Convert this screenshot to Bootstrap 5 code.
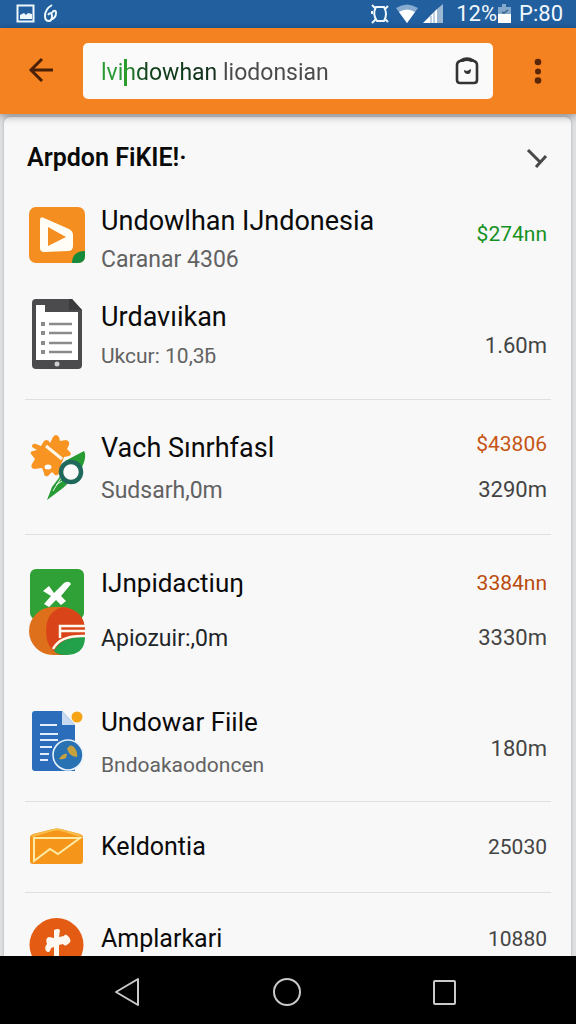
<!DOCTYPE html>
<html lang="id">
<head>
<meta charset="utf-8">
<meta name="viewport" content="width=device-width, initial-scale=1">
<title>Undowlhan</title>
<link href="https://cdn.jsdelivr.net/npm/bootstrap@5.3.0/dist/css/bootstrap.min.css" rel="stylesheet">
<style>
  body { font-family: Roboto, "Liberation Sans", sans-serif; background: #dedfe1; color: #0a0a0a; }
  svg { display: block; flex: none; }
  .status-bar { background: #215f9e; height: 28px; font-size: 22px; line-height: 28px; color: #f2f8fd; padding: 0 13px 0 16px; }
  .app-bar { background: #f58220; height: 86px; padding: 0 20px 0 24px; box-shadow: 0 2px 8px rgba(0,0,0,.4); z-index: 1; }
  .plain-btn { background: none; border: 0; padding: 0; }
  .search-box { background: #fafafa; border-radius: 5px; height: 56px; margin: 0 27px 0 25px; padding: 0 13px 0 18px; }
  .search-box input { font-size: 23px; line-height: 32px; border: 0; padding: 3px 0 0; outline: 0; min-width: 0; color: transparent;
    background: linear-gradient(90deg, #279a35 24px, #12451d 42px, #10301a 112px, #4a4a4a 124px); -webkit-background-clip: text; background-clip: text; }
  .text-caret { width: 3px; height: 27px; left: 23px; top: 5px; background: #2c9c2c; }
  .feed { scrollbar-width: none; padding: 3px 5px 0 4px; }
  .feed::-webkit-scrollbar { display: none; }
  .sheet { background: #f8f8f8; border-radius: 6px 6px 0 0; padding: 24px 20px 0 21px; box-shadow: 0 0 3px rgba(0,0,0,.25); }
  .sheet h1 { font-size: 25px; line-height: 34px; font-weight: 600; margin: 0; }
  .sheet-head { margin-bottom: 28px; padding: 0 3px 0 2px; }
  .entry { gap: 16px; }
  .entry h2 { font-size: 27px; line-height: 36px; font-weight: 400; margin: 0; }
  .entry p { font-size: 23px; line-height: 26px; margin: 0; color: #626262; }
  .amount { font-size: 22px; line-height: 28px; color: #444; }
  .amount.price, .price { font-size: 21px; }
  .lines { display: flex; flex-direction: column; justify-content: space-between; }
  .icon-col { width: 56px; }
  .h-short { height: 70px; }
  .h-mid { height: 74px; }
  .h-tall { height: 87px; }
  .group { border-bottom: 1px solid #dfe0e1; padding: 30px 0; }
  .group.first { padding-top: 0; }
  .group.pair { padding-bottom: 23px; }
  .group.pair h2 { font-size: 26px; }
  .group.single { padding: 26px 0; }
  .group.single h2 { font-size: 25px; }
  .group.single .amount, .entry p.long-line { font-size: 21px; }
  .group.last { padding-top: 24px; }
  .stack-a { margin-bottom: 26px; }
  .stack-b { margin-bottom: 48px; }
  .nav-keys { background: #000; height: 68px; padding: 4px 116px 0 112px; }
</style>
</head>
<body>
<div class="d-flex flex-column vh-100">
  <div class="status-bar d-flex align-items-center justify-content-between flex-shrink-0">
    <div class="d-flex align-items-center gap-2">
      <svg width="20" height="20" viewBox="0 0 20 20"><rect x="1.5" y="1.5" width="16" height="16" fill="none" stroke="#eef8fc" stroke-width="2"/><path d="M4 15V11l4-2 2 2 2-2 4 1v5z" fill="#eef8fc"/></svg>
      <svg width="14" height="20" viewBox="0 0 14 20"><path d="M8 1C3 4 1 8 1 12c0 4 2 5 4 5s3-2 3-5-2-4-4-1M6 16c4-1 6-4 6-7 0-3-3-3-4 0" fill="none" stroke="#eef8fc" stroke-width="2"/></svg>
    </div>
    <div class="d-flex align-items-center">
      <svg class="me-1" width="22" height="22" viewBox="0 0 22 22" fill="none" stroke="#eef8fc" stroke-width="2"><path d="M7 4h8q4 7 0 14H8q-5-7-1-14zM3 2l4 4M19 3l-3 3M3 20l4-4M19 19l-3-3M3 8v3"/></svg>
      <svg class="me-1" width="24" height="20" viewBox="0 0 24 20"><path d="M1 4Q12-3 23 4L12 19z" fill="#87acd0"/><path d="M4 8q8-5 16 0l-8 11z" fill="#fff"/></svg>
      <svg width="21" height="20" viewBox="0 0 21 20"><path d="M0 19 14 5v14z" fill="#fff"/><path d="M14 5 20 0v19h-6z" fill="#9db8d3"/><path d="M8 12v7M11 8v11" stroke="#7fa5c9"/></svg>
      <span class="ps-2 ms-1">12%</span>
      <svg width="14" height="20" viewBox="0 0 14 20"><path d="M1 3h4V0h4v3h5v8H1z" fill="#83a8cb"/><path d="M1 10h13v9H1z" fill="#fff"/><path d="m5 8 2 1 4-3" fill="none" stroke="#3c638c" stroke-width="1.500"/></svg>
      <span class="ms-2">P:80</span>
    </div>
  </div>

  <header class="app-bar d-flex align-items-center flex-shrink-0 position-relative">
    <button class="plain-btn" type="button" aria-label="Kembali">
      <svg width="34" height="30" viewBox="0 0 34 30" fill="none" stroke="#4b2008" stroke-width="3"><path d="M29 14H8M18 3 7 14l11 11"/></svg>
    </button>
    <div class="search-box d-flex align-items-center flex-grow-1">
      <div class="position-relative flex-grow-1 d-flex">
        <input class="flex-grow-1 w-100" type="text" value="lvindowhan liodonsian" aria-label="Cari">
        <span class="text-caret position-absolute"></span>
      </div>
      <button class="plain-btn" type="button" aria-label="Tempel">
        <svg width="26" height="30" viewBox="0 0 26 30"><path d="M3 9q0-3 3-4l4-2q3-1 6 0l4 2q3 1 3 4v15q0 3-3 3H6q-3 0-3-3z" fill="none" stroke="#333" stroke-width="2.600"/><path d="m6 6 4-3q3-1 6 0l4 3-3 0q-4-2-8 0z" fill="#333"/><path d="m10 14 3 1 4-2q0 5-3 5-4 0-4-4z" fill="#333"/></svg>
      </button>
    </div>
    <button class="plain-btn" type="button" aria-label="Menu">
      <svg width="36" height="30" viewBox="0 0 36 30" fill="#5a2706"><circle cx="18" cy="6" r="3.300"/><circle cx="18" cy="15.500" r="3"/><circle cx="18" cy="24.500" r="3.300"/></svg>
    </button>
  </header>

  <main class="feed flex-grow-1 overflow-auto">
    <div class="sheet">
      <div class="sheet-head d-flex align-items-center justify-content-between">
        <h1>Arpdon FiKIE!·</h1>
        <button class="plain-btn" type="button" aria-label="Buka">
          <svg width="22" height="20" viewBox="0 0 22 20" fill="none" stroke="#484848" stroke-width="3"><path d="m2 2 12 12M10 19 20 8"/></svg>
        </button>
      </div>

      <div class="group first">
        <div class="entry d-flex ps-1 pe-1 stack-a">
          <div class="icon-col mt-1">
            <svg width="57" height="58" viewBox="0 0 57 58"><rect width="56" height="56" rx="7" fill="#f58e20"/><path d="M11 13q0-4 4-2l25 11q4 2 4 6v11q0 5-5 5l-24 1q-4 0-4-4z" fill="#fffdf5"/><path d="M19 20v19l18-9z" fill="#f58e20"/><path d="M43 56c0-8 5-12 13-12v5q0 7-7 7z" fill="#168a3b"/></svg>
          </div>
          <div class="lines h-short flex-grow-1"><h2>Undowlhan IJndonesia</h2><p>Caranar 4306</p></div>
          <div class="amount price align-self-center pb-2" style="color:#15921f">$274nn</div>
        </div>
        <div class="entry d-flex ps-1 pe-1">
          <div class="icon-col d-flex justify-content-center">
            <svg width="50" height="70" viewBox="0 0 50 70"><path d="M4 0h36l10 11v55q0 4-4 4H4q-4 0-4-4V4q0-4 4-4z" fill="#4b4b4d"/><path d="M4 6h9v7h33v48H4z" fill="#fff"/><path d="M37 0h3l10 11H37z" fill="#3a3a3c"/><path d="M9 25h4M9 34h4M9 44h4M9 53h4" stroke="#8b8b8d" stroke-width="4"/><path d="M17 25h23M17 34h23M17 44h23M17 53h23" stroke="#8b8b8d" stroke-width="2.500"/><circle cx="25" cy="65" r="2.500" fill="#d0d0d0"/></svg>
          </div>
          <div class="lines h-short flex-grow-1"><h2>Urdavıikan</h2><p class="long-line">Ukcur: 10,3ƃ</p></div>
          <div class="amount align-self-center pt-4">1.60m</div>
        </div>
      </div>

      <div class="group">
        <div class="entry d-flex ps-1 pe-1">
          <div class="icon-col d-flex align-items-center">
            <svg width="58" height="67" viewBox="0 0 58 67"><path d="M3 13q0-4 4-3l5 2 3-5q4-3 6 2l3-6q3-4 6 0l1 4 6-1q4 1 3 5l-2 4 3 3q2 3-1 4l-5 1-3 8-2 7q0 4-4 3l-3-3-4 4q-4 1-4-3l-2-5-8 1q-4-1-2-5l3-5-4-5q-1-3 2-3l4-1z" fill="#f79422"/><path d="m17 12 16 13" stroke="#fff7e8" stroke-width="3"/><ellipse cx="19" cy="33" rx="3.500" ry="2.500" fill="#fff"/><path d="M36 27 55 17q4 6-5 22L34 54 18 66l5-13 13-17z" fill="#279b34"/><path d="m24 57 8-13M27 51l6-4" stroke="#e6f5e5" stroke-width="1"/><circle cx="42" cy="38" r="10" fill="#fafafa" stroke="#20685c" stroke-width="4.500"/></svg>
          </div>
          <div class="lines h-mid flex-grow-1"><h2>Vach Sınrhfasl</h2><p>Sudsarh,0m</p></div>
          <div class="amount lines h-mid text-end"><span class="price" style="color:#c65412">$43806</span><span>3290m</span></div>
        </div>
      </div>

      <div class="group pair">
        <div class="entry d-flex ps-1 pe-1 stack-b">
          <div class="icon-col mt-1">
            <svg width="57" height="87" viewBox="0 0 57 87"><rect x="1" width="54" height="50" rx="6" fill="#30a137"/><path d="m14 22 6-5 5 7 10-10q5-3 7 1L32 27l5 5-5 4-5-5-7 7-5-3 7-8z" fill="#fff"/><rect y="38" width="56" height="48" rx="24" fill="#de701b"/><path d="M17 62q0-20 17-24 22 3 22 24 0 24-24 24-15-5-15-24z" fill="#d94519"/><path d="M25 82q7-15 31-14 0 18-20 18-8 0-11-4z" fill="#23a04a"/><path d="M31 69V57h25M31 62h25M24 80q7-14 32-13" fill="none" stroke="#fff8ed" stroke-width="2.500"/></svg>
          </div>
          <div class="lines h-tall flex-grow-1"><h2>IJnpidactiuŋ</h2><p class="text-body">Apiozuir:,0m</p></div>
          <div class="amount lines h-tall text-end"><span class="price pt-1" style="color:#b94a0c">3384nn</span><span>3330m</span></div>
        </div>
        <div class="entry d-flex ps-1 pe-1">
          <div class="icon-col d-flex align-items-center">
            <svg width="57" height="61" viewBox="-3 0 57 61"><path d="M3 0h27l13 14v46H3q-3 0-3-3V3q0-3 3-3z" fill="#2b6dbb"/><path d="M30 0v14h13z" fill="#c7daef"/><path d="M8 14h17M8 23h18M8 29h18M8 36h12M8 43h9M8 49h8" stroke="#e4eefa" stroke-width="2"/><circle cx="45" cy="6" r="5.500" fill="#f6a316"/><circle cx="36" cy="44" r="15" fill="#2872b4" stroke="#e9f3fb" stroke-width="1.600"/><path d="M27 48q4-6 8-5l-1 4q-4 2-7 1zM35 38q3-6 7-2 4 5 3 10-7 0-10-8z" fill="#c6a23e"/></svg>
          </div>
          <div class="lines h-mid flex-grow-1"><h2>Undowar Fiile</h2><p class="long-line">Bndoakaodoncen</p></div>
          <div class="amount align-self-center pt-3">180m</div>
        </div>
      </div>

      <div class="group single">
        <div class="entry d-flex align-items-center ps-1 pe-1">
          <div class="icon-col">
            <svg width="56" height="38" viewBox="0 0 56 38"><path d="M1 10q0-3 3-4L24 1q4-1 8 0l19 5q3 1 3 4v23q0 3-3 3H4q-3 0-3-3z" fill="#f5961b"/><path d="M3 8 24 2q4-1 8 0l20 6" fill="none" stroke="#f7bd4a" stroke-width="2"/><path d="M5 10h46L29 26l-8-5L5 33z" fill="none" stroke="#fdeaa6" stroke-width="2"/></svg>
          </div>
          <h2 class="flex-grow-1">Keldontia</h2>
          <div class="amount">25030</div>
        </div>
      </div>

      <div class="group single last">
        <div class="entry d-flex ps-1 pe-1">
          <div class="icon-col">
            <svg width="56" height="56" viewBox="0 0 56 56"><circle cx="27.500" cy="28" r="27" fill="#e45b13"/><path d="M25 13q4-2 6 0l-1 7 5-1q1-3 4 0 5 5 0 8-3 3-5 0l-4 1v16h-5V30l-3 1q-1 6-5 3-2-4 1-7-2-6 2-7l5 1z" fill="#fff8f0"/></svg>
          </div>
          <h2 class="flex-grow-1 pt-1">Amplarkari</h2>
          <div class="amount pt-2">10880</div>
        </div>
      </div>
    </div>
  </main>

  <nav class="nav-keys d-flex align-items-center justify-content-between flex-shrink-0" aria-label="Navigasi">
    <button class="plain-btn" type="button" aria-label="Kembali"><svg width="30" height="32" viewBox="0 0 30 32" fill="none" stroke="#c9c9c9" stroke-width="2" stroke-linejoin="round"><path d="M26 3v26L4 16z"/></svg></button>
    <button class="plain-btn" type="button" aria-label="Beranda"><svg width="32" height="32" viewBox="0 0 32 32" fill="none" stroke="#c9c9c9" stroke-width="2"><circle cx="17" cy="16" r="13"/></svg></button>
    <button class="plain-btn" type="button" aria-label="Terbaru"><svg width="30" height="32" viewBox="0 0 30 32" fill="none" stroke="#c9c9c9" stroke-width="2"><rect x="4" y="5" width="21" height="23" rx="1"/></svg></button>
  </nav>
</div>
<script src="https://cdn.jsdelivr.net/npm/bootstrap@5.3.0/dist/js/bootstrap.bundle.min.js"></script>
</body>
</html>
